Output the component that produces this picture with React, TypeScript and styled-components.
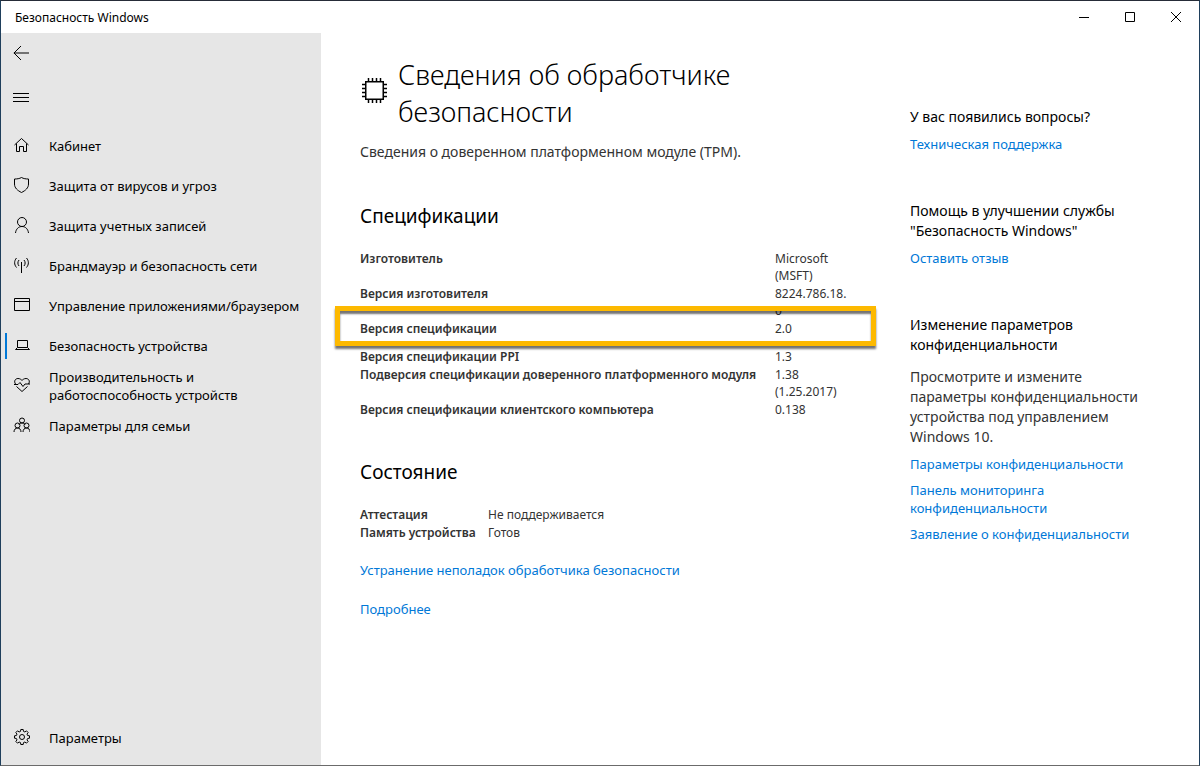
import React from "react";
import styled, { createGlobalStyle, css } from "styled-components";

const Global = createGlobalStyle`
  *, *::before, *::after { box-sizing: border-box; }
  html, body, #root { height: 100%; margin: 0; }
  body { font-family: "Noto Sans", "Open Sans", sans-serif; font-size: 13px; color: #000; background: #fff; }
  h1, h2, h3, p, ul, table { margin: 0; padding: 0; }
  button { font: inherit; color: inherit; background: none; border: 0; padding: 0; }
  a { color: #0078d7; text-decoration: none; }
`;

const Window = styled.div`
  min-height: 100vh;
  display: flex;
  flex-direction: column;
  border: 1px solid #1f3f5c;
  border-top-color: #262c38;
  border-bottom-color: #6b6b6b;
`;
const TitleBar = styled.header`
  height: 32px;
  display: flex;
  align-items: center;
  justify-content: space-between;
  padding-left: 14px;
  font-size: 12px;
`;
const WindowControls = styled.div`
  display: flex;
  height: 100%;
`;
const ControlButton = styled.button`
  width: 46px;
  display: grid;
  place-items: center;
`;
const Body = styled.div`
  flex: 1;
  display: flex;
`;
const Sidebar = styled.aside`
  width: 320px;
  flex: none;
  display: flex;
  flex-direction: column;
  background: #e6e6e6;
  padding-bottom: 7px;
`;
const PaneButton = styled.button`
  width: 40px;
  height: 40px;
  display: grid;
  place-items: center;
`;
const MenuButton = styled(PaneButton)`
  margin: 4px 0 9px;
`;
const NavList = styled.ul`
  list-style: none;
`;
const NavLink = styled.a<{ $active?: boolean }>`
  height: 40px;
  display: flex;
  align-items: center;
  gap: 19px;
  padding: 0 8px 0 7px;
  color: #000;
  line-height: 18px;
  border-left: 4px solid transparent;
  ${(p) =>
    p.$active &&
    css`
      padding-left: 7px;
      border-image: linear-gradient(transparent 8px, #0078d7 8px 32px, transparent 32px) 1;
      border-left-width: 2px;
      margin-left: 4px;
      padding-left: 5px;
    `}
  svg { flex: none; margin-bottom: 2px; }
`;
const SettingsLink = styled(NavLink)`
  margin-top: auto;
`;
const Content = styled.main`
  flex: 1;
  display: flex;
  align-items: flex-start;
  gap: 62px;
  padding: 23px 50px 40px 39px;
`;
const Main = styled.section`
  width: 488px;
  flex: none;
`;
const Heading = styled.div`
  display: flex;
  align-items: center;
  gap: 10px;
  svg { flex: none; margin-bottom: 6px; }
`;
const Title = styled.h1`
  font-size: 27px;
  line-height: 37px;
  font-weight: 300;
`;
const Lead = styled.p`
  margin-top: 12px;
  font-size: 14px;
  line-height: 20px;
  color: #333;
`;
const SectionTitle = styled.h2`
  margin-top: 40px;
  font-size: 19px;
  line-height: 28px;
  font-weight: 400;
`;
const DataTable = styled.table`
  margin-top: 20px;
  border-collapse: collapse;
  font-size: 12px;
  line-height: 17px;
  color: #333;
  th, td { padding: 0 0 1px; text-align: left; vertical-align: top; }
  th { font-weight: 600; white-space: nowrap; }
`;
const SpecTable = styled(DataTable)`
  width: 100%;
  table-layout: fixed;
  margin-bottom: -1px;
  td { overflow-wrap: anywhere; }
`;
const StateTable = styled(DataTable)`
  th { width: 128px; }
`;
const SpecRow = styled.tr<{ $marked?: boolean }>`
  ${(p) =>
    p.$marked &&
    css`
      position: relative;
      th, td { padding-bottom: 11px; }
    `}
`;
const Marker = styled.span`
  position: absolute;
  inset: -14px -28px 2px -25px;
  border: 5px solid #fdb900;
  box-shadow: 0 3px 2px rgba(0, 0, 0, 0.55), inset 0 3px 2px rgba(0, 0, 0, 0.55);
  pointer-events: none;
`;
const ActionLink = styled.a`
  display: block;
  margin-top: 20px;
  line-height: 19px;
  ${StateTable} + & { margin-top: 19px; }
`;
const Aside = styled.aside`
  width: 240px;
  padding-top: 51px;
`;
const HelpBlock = styled.section`
  & + & { margin-top: 48px; }
`;
const HelpTitle = styled.h3`
  font-size: 14px;
  line-height: 20px;
  font-weight: 400;
`;
const HelpText = styled.p`
  margin-top: 12px;
  font-size: 14px;
  line-height: 20px;
  color: #333;
`;
const HelpLink = styled.a`
  display: block;
  margin-top: 8px;
  line-height: 18px;
`;

const Icon = ({ children, size = 18, width = 1 }: { children: React.ReactNode; size?: number; width?: number }) => (
  <svg width={size} height={size} viewBox={`0 0 ${size} ${size}`} fill="none" stroke="#000" strokeWidth={width} aria-hidden="true">
    {children}
  </svg>
);

const nav = [
  { label: "Кабинет", icon: <path d="M2.5 9 9.5 2.5 16.5 9M4.5 7.5v8h3v-5h4v5h3v-8" /> },
  { label: "Защита от вирусов и угроз", icon: <path d="M9.5 1.5c-2 1.2-4.5 1.5-7 1.5v5c0 4 3 6.500 7 8.500 4-2 7-4.500 7-8.500v-5c-2.500 0-5-.300-7-1.500z" /> },
  { label: "Защита учетных записей", icon: <><circle cx="10" cy="6" r="4.500" /><path d="M3.500 17c.5-4 3-6.500 6.500-6.500s6 2.500 6.500 6.500" /></> },
  { label: "Брандмауэр и безопасность сети", icon: <path d="M9.500 6v11M4.500 2c-2.500 3-2.500 6.500 0 9.500M7 4c-1.500 2-1.500 4 0 6M12 4c1.500 2 1.500 4 0 6M14.500 2c2.500 3 2.500 6.500 0 9.500" /> },
  { label: "Управление приложениями/браузером", icon: <path d="M2.500 2.500h15v12h-15zM2.500 5.500h15" /> },
  { label: "Безопасность устройства", active: true, icon: <path d="M5.500 4.500h10v7h-10zM5.500 11.500l-2 2h14l-2-2" /> },
  { label: "Производительность и работоспособность устройств", icon: <path d="M3.500 8C1.500 5 3.500 2.500 6 2.500c2 0 3 1 4 2 1-1 2-2 4-2 2.500 0 4.500 2.500 2.500 5.500M2 8.500h4l2-2 3 4 2-2.500h5M4.500 10.500l5.500 5 5.500-5" /> },
  { label: "Параметры для семьи", icon: <><circle cx="10" cy="4.500" r="2.500" /><circle cx="5.500" cy="9.500" r="2.500" /><circle cx="14.500" cy="9.500" r="2.500" /><path d="M2 16c0-2.500 1.500-4 3.500-4s3.500 1.500 3.500 4M11 16c0-2.500 1.500-4 3.500-4s3.500 1.500 3.500 4M7 8.500c1-2 5-2 6 0" /></> },
];

const gear = Array.from({ length: 8 }, (_, i) => {
  const at = (r: number, deg: number) => {
    const a = ((i * 45 + deg) * Math.PI) / 180;
    return `${(10 + r * Math.sin(a)).toFixed(2)} ${(9 - r * Math.cos(a)).toFixed(2)}`;
  };
  return `${i ? "L" : "M"}${at(7.6, -9)}L${at(7.6, 9)}L${at(5.8, 15)}L${at(5.8, 30)}`;
}).join("") + "z";

const specs = [
  { name: "Изготовитель", value: "Microsoft (MSFT)" },
  { name: "Версия изготовителя", value: "8224.786.18.0" },
  { name: "Версия спецификации", value: "2.0", marked: true },
  { name: "Версия спецификации PPI", value: "1.3" },
  { name: "Подверсия спецификации доверенного платформенного модуля", value: "1.38 (1.25.2017)" },
  { name: "Версия спецификации клиентского компьютера", value: "0.138" },
];

export default function App() {
  return (
    <>
      <Global />
      <Window>
        <TitleBar>
          <span>Безопасность Windows</span>
          <WindowControls>
            <ControlButton aria-label="Свернуть"><Icon size={10}><path d="M0 5.500h10" /></Icon></ControlButton>
            <ControlButton aria-label="Развернуть"><Icon size={10}><path d="M.5 .5h9v9h-9z" /></Icon></ControlButton>
            <ControlButton aria-label="Закрыть"><Icon size={10}><path d="M0 0l10 10M10 0L0 10" /></Icon></ControlButton>
          </WindowControls>
        </TitleBar>
        <Body>
          <Sidebar>
            <PaneButton aria-label="Назад"><Icon size={16}><path d="M16 8H.8M8 1l-7 7 7 7" /></Icon></PaneButton>
            <MenuButton aria-label="Меню"><Icon size={16}><path d="M0 4.500h16M0 8.500h16M0 12.500h16" /></Icon></MenuButton>
            <nav>
              <NavList>
                {nav.map((n) => (
                  <li key={n.label}>
                    <NavLink href="#" $active={n.active}><Icon>{n.icon}</Icon>{n.label}</NavLink>
                  </li>
                ))}
              </NavList>
            </nav>
            <SettingsLink href="#"><Icon><path d={gear} /><circle cx="10" cy="9" r="2.500" /></Icon>Параметры</SettingsLink>
          </Sidebar>
          <Content>
            <Main>
              <Heading>
                <Icon size={28} width={1.5}>
                  <path d="M5.750 5.750h17.500v17.500h-17.500z" />
                  <path d="M8.500 2v3M12.500 2v3M16.500 2v3M20.500 2v3M8.500 24v3M12.500 24v3M16.500 24v3M20.500 24v3M2 8.500h3M2 12.500h3M2 16.500h3M2 20.500h3M24 8.500h3M24 12.500h3M24 16.500h3M24 20.500h3" />
                </Icon>
                <Title>Сведения об обработчике<br />безопасности</Title>
              </Heading>
              <Lead>Сведения о доверенном платформенном модуле (TPM).</Lead>
              <SectionTitle>Спецификации</SectionTitle>
              <SpecTable>
                <colgroup><col /><col width="73" /></colgroup>
                <tbody>
                  {specs.map((s) => (
                    <SpecRow key={s.name} $marked={s.marked}>
                      <th scope="row">{s.name}{s.marked && <Marker />}</th>
                      <td>{s.value}</td>
                    </SpecRow>
                  ))}
                </tbody>
              </SpecTable>
              <SectionTitle>Состояние</SectionTitle>
              <StateTable>
                <tbody>
                  <tr><th scope="row">Аттестация</th><td>Не поддерживается</td></tr>
                  <tr><th scope="row">Память устройства</th><td>Готов</td></tr>
                </tbody>
              </StateTable>
              <ActionLink href="#">Устранение неполадок обработчика безопасности</ActionLink>
              <ActionLink href="#">Подробнее</ActionLink>
            </Main>
            <Aside>
              <HelpBlock>
                <HelpTitle>У вас появились вопросы?</HelpTitle>
                <HelpLink href="#">Техническая поддержка</HelpLink>
              </HelpBlock>
              <HelpBlock>
                <HelpTitle>Помощь в улучшении службы "Безопасность Windows"</HelpTitle>
                <HelpLink href="#">Оставить отзыв</HelpLink>
              </HelpBlock>
              <HelpBlock>
                <HelpTitle>Изменение параметров конфиденциальности</HelpTitle>
                <HelpText>Просмотрите и измените параметры конфиденциальности устройства под управлением Windows 10.</HelpText>
                <HelpLink href="#">Параметры конфиденциальности</HelpLink>
                <HelpLink href="#">Панель мониторинга<br />конфиденциальности</HelpLink>
                <HelpLink href="#">Заявление о конфиденциальности</HelpLink>
              </HelpBlock>
            </Aside>
          </Content>
        </Body>
      </Window>
    </>
  );
}
